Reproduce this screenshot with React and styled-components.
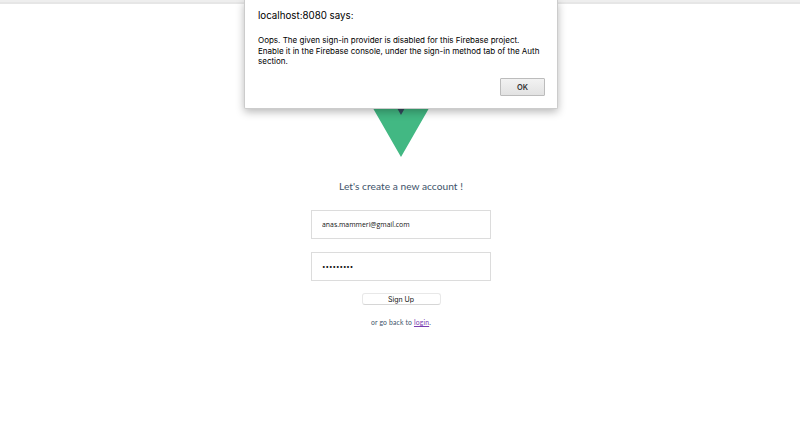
import React from "react";
import styled, { createGlobalStyle } from "styled-components";

const GlobalStyle = createGlobalStyle`
  * { box-sizing: border-box; }
  body { margin: 0; background: #fff; overflow: hidden; }
`;

const Page = styled.div`
  position: relative;
  height: 423px;
  display: flex;
  flex-direction: column;
  font-family: Lato, sans-serif;
  color: #40536a;
`;

const BrowserEdge = styled.div`
  height: 4px;
  flex: none;
  background: #eeeeee;
  border-bottom: 2px solid #e6e6e6;
`;

const SignUpForm = styled.main`
  display: flex;
  flex-direction: column;
  align-items: center;
  padding: 45px 0 0 2px;
`;

const Logo = styled.svg`
  display: block;
  width: 124px;
  height: 108px;
`;

const Heading = styled.h3`
  margin: 22px 0 16px;
  font-size: 10.2px;
  line-height: 15px;
  font-weight: 400;
  letter-spacing: 0.03px;
  white-space: nowrap;
`;

const Field = styled.input`
  display: block;
  width: 180px;
  height: 29px;
  margin: 0 0 13px;
  padding: 0 10px;
  border: 1px solid #dcdcdc;
  border-radius: 0;
  outline: none;
  background: #fff;
  color: #111;
  font-family: ${(p) => (p.type === "password" ? "Inter" : '"Open Sans"')}, sans-serif;
  font-size: ${(p) => (p.type === "password" ? "6.2px" : "6.9px")};
`;

const SubmitButton = styled.button`
  width: 79px;
  height: 12px;
  margin-top: -1px;
  padding: 1px 0 0;
  border: 1px solid #e8e8e8;
  border-bottom-color: #d6d6d6;
  border-radius: 3px;
  background: #fff;
  color: #111;
  font: 400 7px/10px Inter, sans-serif;
`;

const Hint = styled.p`
  margin: 12px 0 0;
  font-size: 6.8px;
  line-height: 10px;
  letter-spacing: 0.16px;
  white-space: nowrap;
`;

const Link = styled.a`
  color: #7a3db0;
  text-decoration: underline;
`;

const Dialog = styled.section`
  position: absolute;
  top: 0;
  left: 244px;
  width: 314px;
  height: 109px;
  display: flex;
  flex-direction: column;
  padding: 9px 12px 12px 13px;
  border: 1px solid #cccccc;
  border-top: 0;
  border-radius: 0 0 2px 2px;
  background: #fff;
  box-shadow: 0 3px 9px rgba(0, 0, 0, 0.28);
  color: #000;
  font-family: Inter, sans-serif;
`;

const DialogTitle = styled.h2`
  margin: 0 0 13px;
  font-size: 9.75px;
  line-height: 13px;
  font-weight: 400;
`;

const DialogMessage = styled.p`
  margin: 0;
  font-size: 8.02px;
  line-height: 10.6px;
  white-space: nowrap;
`;

const MessageLine = styled.span`
  display: block;
`;

const ConfirmButton = styled.button`
  align-self: flex-end;
  width: 45px;
  height: 18px;
  margin-top: auto;
  padding: 1px 0 0;
  border: 1px solid #bcbcbc;
  border-radius: 1px;
  background: linear-gradient(#f2f2f2, #e2e2e2);
  color: #333;
  font: 600 7.5px/16px Inter, sans-serif;
`;

export default function App() {
  return (
    <>
      <GlobalStyle />
      <Page>
        <BrowserEdge />
        <SignUpForm>
          <Logo viewBox="0 0 261.76 226.69" preserveAspectRatio="none">
            <path fill="#42b883" d="M161.1 0 130.87 52.35 100.65 0H0l130.87 226.69L261.75 0z" />
            <path fill="#35495e" d="M161.1 0 130.87 52.35 100.65 0H52.35l78.52 138.5L209.4 0z" />
          </Logo>
          <Heading>Let's create a new account !</Heading>
          <Field type="text" defaultValue="anas.mammeri@gmail.com" />
          <Field type="password" defaultValue="abcdefghi" />
          <SubmitButton>Sign Up</SubmitButton>
          <Hint>
            or go back to <Link href="#">login</Link>.
          </Hint>
        </SignUpForm>
        <Dialog role="alertdialog">
          <DialogTitle>localhost:8080 says:</DialogTitle>
          <DialogMessage>
            <MessageLine>Oops. The given sign-in provider is disabled for this Firebase project.</MessageLine>
            <MessageLine>Enable it in the Firebase console, under the sign-in method tab of the Auth</MessageLine>
            <MessageLine>section.</MessageLine>
          </DialogMessage>
          <ConfirmButton>OK</ConfirmButton>
        </Dialog>
      </Page>
    </>
  );
}
